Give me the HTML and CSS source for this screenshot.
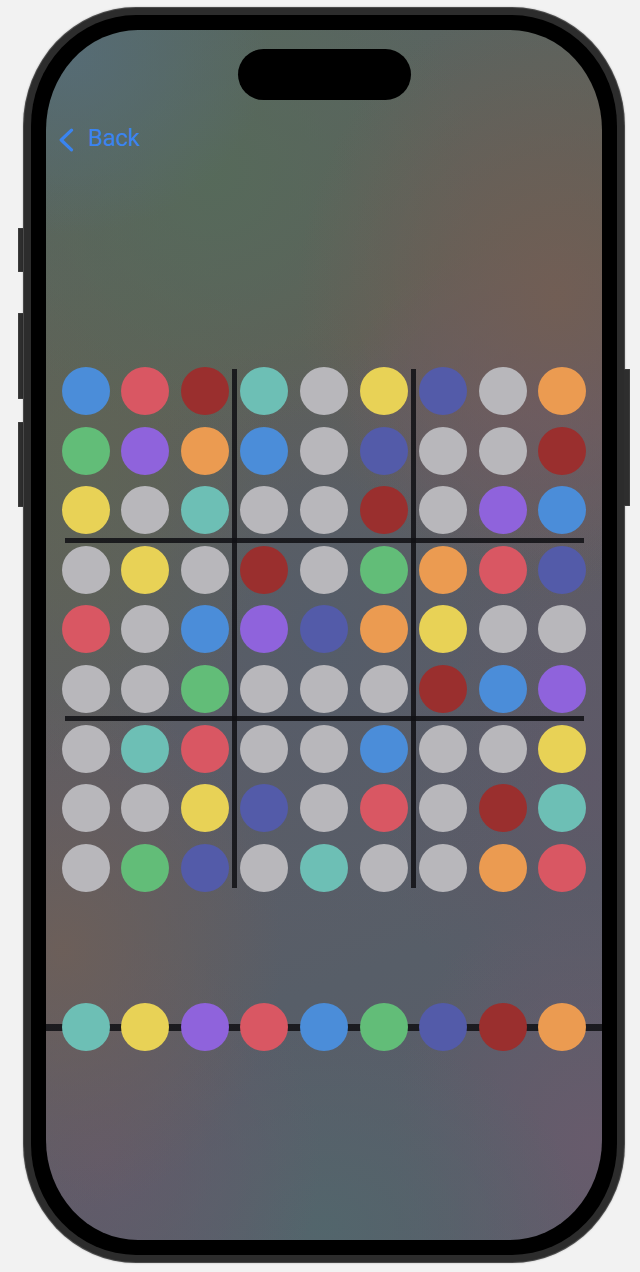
FILE: index.html
```html
<!DOCTYPE html>
<html lang="en">
<head>
<meta charset="utf-8">
<title>Color Sudoku</title>
<link rel="stylesheet" href="styles.css">
</head>
<body>
<div class="page">
  <div class="buttons-left">
    <div class="side-btn btn-action"></div>
    <div class="side-btn btn-vol-up"></div>
    <div class="side-btn btn-vol-down"></div>
  </div>
  <div class="frame">
    <div class="bezel">
      <div class="screen">
        <div class="island"></div>
        <div class="nav">
          <svg class="chevron" width="16" height="24" viewBox="0 0 16 24" aria-hidden="true">
            <path d="M13.5 2.2 L3.2 12 L13.5 21.8" fill="none" stroke="#3a84f0" stroke-width="3.2" stroke-linecap="round" stroke-linejoin="round"/>
          </svg>
          <span class="back">Back</span>
        </div>
        <div class="board">
          <span class="dot blue"></span><span class="dot red"></span><span class="dot dark"></span><span class="dot teal"></span><span class="dot gray"></span><span class="dot yellow"></span><span class="dot indigo"></span><span class="dot gray"></span><span class="dot orange"></span>
          <span class="dot green"></span><span class="dot purple"></span><span class="dot orange"></span><span class="dot blue"></span><span class="dot gray"></span><span class="dot indigo"></span><span class="dot gray"></span><span class="dot gray"></span><span class="dot dark"></span>
          <span class="dot yellow"></span><span class="dot gray"></span><span class="dot teal"></span><span class="dot gray"></span><span class="dot gray"></span><span class="dot dark"></span><span class="dot gray"></span><span class="dot purple"></span><span class="dot blue"></span>
          <span class="dot gray"></span><span class="dot yellow"></span><span class="dot gray"></span><span class="dot dark"></span><span class="dot gray"></span><span class="dot green"></span><span class="dot orange"></span><span class="dot red"></span><span class="dot indigo"></span>
          <span class="dot red"></span><span class="dot gray"></span><span class="dot blue"></span><span class="dot purple"></span><span class="dot indigo"></span><span class="dot orange"></span><span class="dot yellow"></span><span class="dot gray"></span><span class="dot gray"></span>
          <span class="dot gray"></span><span class="dot gray"></span><span class="dot green"></span><span class="dot gray"></span><span class="dot gray"></span><span class="dot gray"></span><span class="dot dark"></span><span class="dot blue"></span><span class="dot purple"></span>
          <span class="dot gray"></span><span class="dot teal"></span><span class="dot red"></span><span class="dot gray"></span><span class="dot gray"></span><span class="dot blue"></span><span class="dot gray"></span><span class="dot gray"></span><span class="dot yellow"></span>
          <span class="dot gray"></span><span class="dot gray"></span><span class="dot yellow"></span><span class="dot indigo"></span><span class="dot gray"></span><span class="dot red"></span><span class="dot gray"></span><span class="dot dark"></span><span class="dot teal"></span>
          <span class="dot gray"></span><span class="dot green"></span><span class="dot indigo"></span><span class="dot gray"></span><span class="dot teal"></span><span class="dot gray"></span><span class="dot gray"></span><span class="dot orange"></span><span class="dot red"></span>
        </div>
        <div class="palette">
          <span class="dot teal"></span><span class="dot yellow"></span><span class="dot purple"></span><span class="dot red"></span><span class="dot blue"></span><span class="dot green"></span><span class="dot indigo"></span><span class="dot dark"></span><span class="dot orange"></span>
        </div>
      </div>
    </div>
  </div>
  <div class="buttons-right">
    <div class="side-btn btn-power"></div>
  </div>
</div>
</body>
</html>
```
FILE: styles.css
```css
* { box-sizing: border-box; }

html, body {
  margin: 0;
  padding: 0;
  background: #f2f2f2;
}

body {
  width: 640px;
  height: 1272px;
  overflow: hidden;
  font-family: Roboto, "Liberation Sans", sans-serif;
}

.page {
  display: flex;
  align-items: flex-start;
  padding: 8px 0 0 18px;
}

.buttons-left {
  width: 6px;
  display: flex;
  flex-direction: column;
  margin-top: 220px;
}

.buttons-right {
  width: 6px;
  margin-top: 361px;
}

.side-btn {
  width: 6px;
  background: #2e2e2e;
  border: 1px solid #3c3c3c;
  border-radius: 1px;
}

.buttons-left .side-btn { border-right: none; }
.buttons-right .side-btn { border-left: none; }

.btn-action { height: 44px; }
.btn-vol-up { height: 86px; margin-top: 41px; }
.btn-vol-down { height: 85px; margin-top: 23px; }
.btn-power { height: 137px; }

.frame {
  width: 600px;
  height: 1254px;
  padding: 7px;
  border-radius: 112px / 118px;
  background: #2c2c2c;
  box-shadow: 0 0 0 1px #4a4a4a, 0 0 2px 1px rgba(0,0,0,0.25);
}

.bezel {
  height: 100%;
  padding: 15px;
  border-radius: 105px / 111px;
  background: #000;
}

.screen {
  height: 100%;
  border-radius: 92px / 100px;
  overflow: hidden;
  display: flex;
  flex-direction: column;
  background:
    radial-gradient(ellipse 200px 180px at 4% 2%, rgba(86,108,118,0.95), rgba(86,108,118,0) 100%),
    radial-gradient(ellipse 260px 300px at 92% 22%, rgba(114,94,84,0.95), rgba(114,94,84,0) 100%),
    radial-gradient(ellipse 200px 170px at 90% 31%, rgba(104,88,112,0.95), rgba(104,88,112,0) 100%),
    radial-gradient(ellipse 260px 260px at 30% 12%, rgba(86,106,90,0.95), rgba(86,106,90,0) 100%),
    radial-gradient(ellipse 200px 300px at 6% 36%, rgba(94,100,86,0.9), rgba(94,100,86,0) 100%),
    radial-gradient(ellipse 220px 260px at 3% 76%, rgba(110,95,88,0.9), rgba(110,95,88,0) 100%),
    radial-gradient(ellipse 220px 220px at 10% 93%, rgba(100,90,106,0.9), rgba(100,90,106,0) 100%),
    radial-gradient(ellipse 260px 200px at 50% 99%, rgba(82,102,108,0.95), rgba(82,102,108,0) 100%),
    radial-gradient(ellipse 200px 260px at 98% 92%, rgba(104,91,108,0.95), rgba(104,91,108,0) 100%),
    radial-gradient(ellipse 250px 300px at 50% 50%, rgba(84,93,106,0.9), rgba(84,93,106,0) 100%),
    radial-gradient(ellipse 220px 260px at 98% 62%, rgba(95,88,104,0.85), rgba(95,88,104,0) 100%),
    linear-gradient(160deg, #576664 0%, #5f6058 30%, #5d5c65 55%, #575e68 75%, #5c5c69 100%);
}

.island {
  align-self: center;
  width: 173px;
  height: 51px;
  margin-top: 19px;
  border-radius: 26px;
  background: #000;
}

.nav {
  display: flex;
  align-items: flex-start;
  height: 24px;
  margin-top: 26px;
  padding-left: 12px;
}

.chevron {
  display: block;
  margin-top: 2px;
}

.back {
  margin-left: 14px;
  font-size: 24px;
  line-height: 24px;
  color: #3a84f0;
  letter-spacing: -0.3px;
}

.board {
  align-self: center;
  margin-top: 217px;
  display: grid;
  grid-template-columns: repeat(9, 48px);
  grid-auto-rows: 48px;
  gap: 11.6px;
  background:
    linear-gradient(rgba(16,16,20,0.86), rgba(16,16,20,0.86)) 170.6px 2px / 5px 519px no-repeat,
    linear-gradient(rgba(16,16,20,0.86), rgba(16,16,20,0.86)) 349.4px 2px / 5px 519px no-repeat,
    linear-gradient(rgba(16,16,20,0.86), rgba(16,16,20,0.86)) 3px 170.5px / 519px 5px no-repeat,
    linear-gradient(rgba(16,16,20,0.86), rgba(16,16,20,0.86)) 3px 349.3px / 519px 5px no-repeat;
}

.palette {
  margin-top: 111px;
  height: 48px;
  display: flex;
  justify-content: center;
  gap: 11.6px;
  background: linear-gradient(to bottom, transparent 21px, rgba(22,22,26,0.92) 21px, rgba(22,22,26,0.92) 28px, transparent 28px);
}

.dot {
  display: block;
  width: 48px;
  height: 48px;
  border-radius: 50%;
  flex: none;
}

.blue { background: #4b8dd9; }
.red { background: #d95763; }
.dark { background: #9a2f2e; }
.teal { background: #6dbfb5; }
.gray { background: #b8b7bb; }
.yellow { background: #e8d256; }
.indigo { background: #535ba9; }
.orange { background: #eb9b51; }
.green { background: #62bd78; }
.purple { background: #8f63dc; }
```
